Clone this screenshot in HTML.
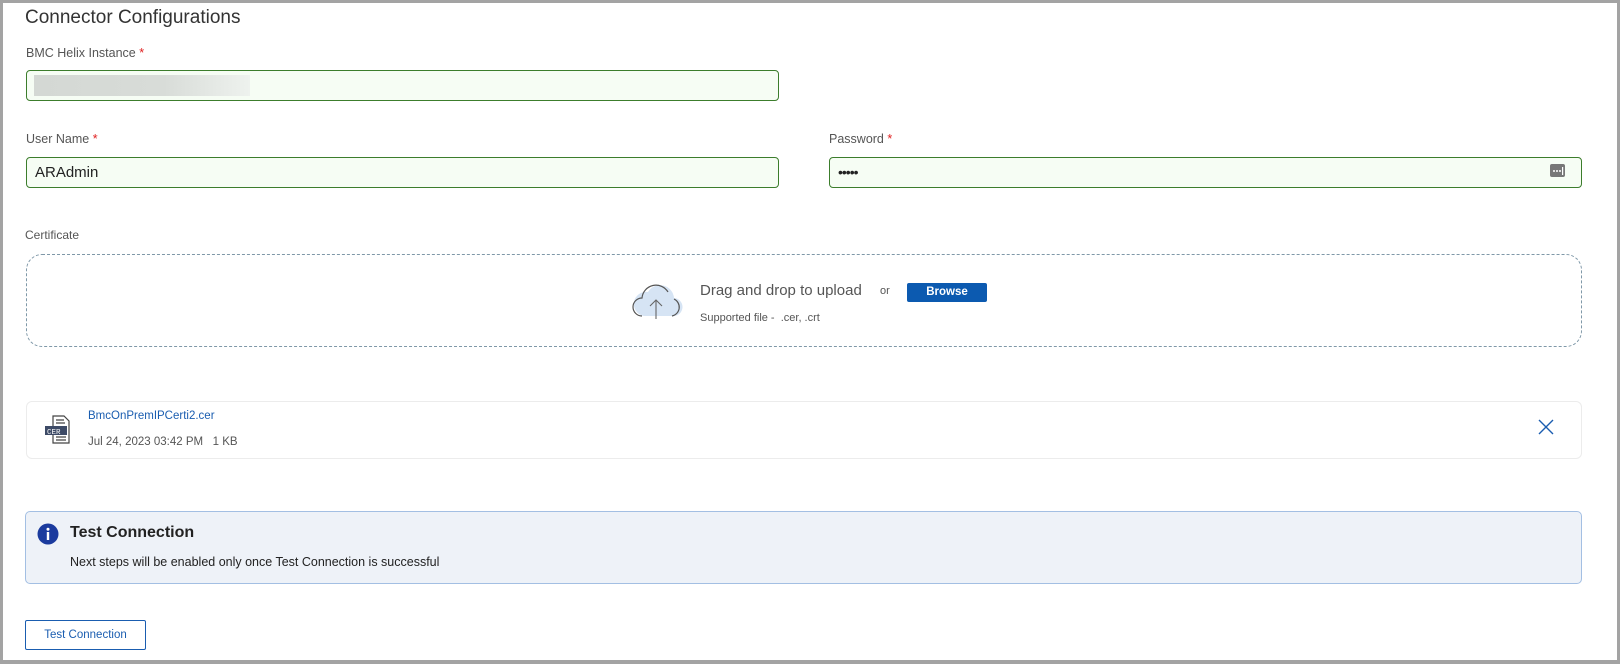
<!DOCTYPE html>
<html><head><meta charset="utf-8"><style>
*{margin:0;padding:0;box-sizing:border-box}
html,body{width:1620px;height:664px;overflow:hidden;background:#a3a3a3;font-family:"Liberation Sans",Arial,sans-serif}
#frame{position:absolute;left:3px;top:3px;width:1614px;height:657px;background:#fff}
.abs{position:absolute}
.lbl{font-size:12.5px;color:#555}
.req{color:#e02020}
.inp{border:1px solid #3c7d2c;border-radius:4px;background:#f6fdf4;height:31px}
</style></head><body>
<div id="frame"></div>
<div class="abs" style="left:25px;top:7px;font-size:19px;color:#333">Connector Configurations</div>
<div class="abs lbl" style="left:26px;top:46px">BMC Helix Instance <span class="req">*</span></div>
<div class="abs inp" style="left:26px;top:70px;width:753px"></div>
<div class="abs" style="left:34px;top:75px;width:216px;height:21px;background:linear-gradient(90deg,#d4d8d4,#d8dcd8 60%,#eef2ee)"></div>
<div class="abs lbl" style="left:26px;top:132px">User Name <span class="req">*</span></div>
<div class="abs inp" style="left:26px;top:157px;width:753px"></div>
<div class="abs" style="left:35px;top:164px;font-size:15px;color:#222">ARAdmin</div>
<div class="abs lbl" style="left:829px;top:132px">Password <span class="req">*</span></div>
<div class="abs inp" style="left:829px;top:157px;width:753px"></div>
<div class="abs" style="left:838px;top:164px;font-size:14px;color:#222;letter-spacing:-1px">•••••</div>
<svg class="abs" style="left:1550px;top:164px" width="16" height="14"><rect x="0" y="0" width="15" height="13" rx="2" fill="#777"/><circle cx="4" cy="7" r="1" fill="#fff"/><circle cx="7" cy="7" r="1" fill="#fff"/><circle cx="10" cy="7" r="1" fill="#fff"/><rect x="12" y="3" width="1.2" height="8" fill="#fff"/></svg>
<div class="abs lbl" style="left:25px;top:228px;font-size:12px">Certificate</div>
<div class="abs" style="left:26px;top:254px;width:1556px;height:93px;border:1px dashed #7f98a8;border-radius:16px"></div>
<svg class="abs" style="left:630px;top:280px" width="54" height="40" viewBox="0 0 54 40"><path d="M14 36 H43 a9 9 0 0 0 1-18 a14 14 0 0 0-26-6 a10 10 0 0 0-4 24z" fill="#d6e4f4"/><path d="M12 36 a9 9 0 0 1 0-18 a14 14 0 0 1 26-6" fill="none" stroke="#555" stroke-width="1.2"/><path d="M44 19 a9 9 0 0 1-2 17" fill="none" stroke="#555" stroke-width="1.2"/><path d="M26 39 V20 M20 26 l6-6 6 6" fill="none" stroke="#666" stroke-width="1.1"/></svg>
<div class="abs" style="left:700px;top:282px;font-size:15px;color:#555">Drag and drop to upload</div>
<div class="abs" style="left:880px;top:285px;font-size:11px;color:#555">or</div>
<div class="abs" style="left:907px;top:283px;width:80px;height:19px;background:#0c5ab0;border-radius:2px;color:#fff;font-size:11.5px;font-weight:bold;text-align:center;line-height:19px">Browse</div>
<div class="abs" style="left:700px;top:312px;font-size:11px;color:#555">Supported file -&nbsp; .cer, .crt</div>
<div class="abs" style="left:26px;top:401px;width:1556px;height:58px;border:1px solid #ececec;border-radius:6px"></div>
<svg class="abs" style="left:44px;top:415px" width="28" height="30" viewBox="0 0 28 30"><path d="M9 1 H20 L25 6 V28 H9z" fill="#fff" stroke="#444" stroke-width="1.2"/><path d="M12 5h8M12 8h9M12 22h10M12 25h10" stroke="#444" stroke-width="1.2"/><rect x="1" y="11" width="22" height="9" fill="#3d4a66"/><text x="3" y="19" font-size="7.5" fill="#fff" font-family="Liberation Mono,monospace">CER</text></svg>
<div class="abs" style="left:88px;top:410px;font-size:11.5px;color:#1a5db0">BmcOnPremIPCerti2.cer</div>
<div class="abs" style="left:88px;top:436px;font-size:11.5px;color:#555">Jul 24, 2023 03:42 PM&nbsp;&nbsp;&nbsp;1 KB</div>
<svg class="abs" style="left:1538px;top:419px" width="16" height="16"><path d="M1 1 L15 15 M15 1 L1 15" stroke="#1a5db0" stroke-width="1.4"/></svg>
<div class="abs" style="left:25px;top:511px;width:1557px;height:73px;background:#eef2f8;border:1px solid #a3bfe3;border-radius:5px"></div>
<svg class="abs" style="left:37px;top:523px" width="22" height="22"><circle cx="11" cy="11" r="10.5" fill="#1b3b9e"/><circle cx="11" cy="6.2" r="1.5" fill="#fff"/><rect x="9.8" y="9" width="2.4" height="8" fill="#fff"/></svg>
<div class="abs" style="left:70px;top:524px;font-size:16px;font-weight:bold;color:#222">Test Connection</div>
<div class="abs" style="left:70px;top:555px;font-size:12.5px;color:#222">Next steps will be enabled only once Test Connection is successful</div>
<div class="abs" style="left:25px;top:620px;width:121px;height:30px;border:1px solid #1a5db0;border-radius:2px;color:#1a5db0;font-size:11.5px;text-align:center;line-height:28px">Test Connection</div>
</body></html>
